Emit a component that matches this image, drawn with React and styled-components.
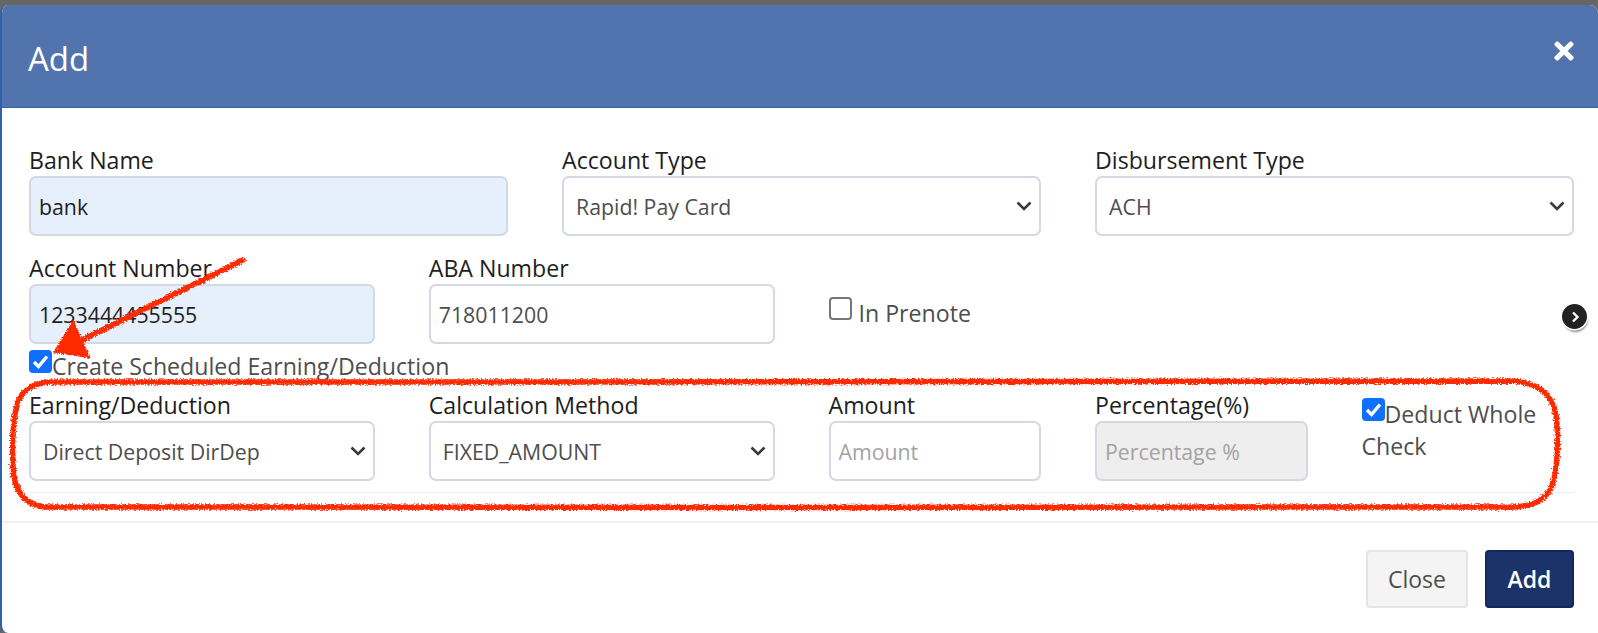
import React from "react";
import styled, { createGlobalStyle } from "styled-components";
import { FaTimes } from "react-icons/fa";

const GlobalStyle = createGlobalStyle`
  html, body {
    margin: 0;
    padding: 0;
    height: 633px;
    overflow: hidden;
    background: #666664;
  }
  * {
    box-sizing: border-box;
  }
`;

const Page = styled.div`
  position: relative;
  width: 1598px;
  height: 633px;
  padding-top: 5px;
  overflow: hidden;
  font-family: "Open Sans", "Liberation Sans", sans-serif;
`;

const Modal = styled.div`
  height: 628px;
  background: #fff;
  border-radius: 8px 8px 0 8px;
  border-left: 2px solid #2f62a8;
  overflow: hidden;
`;

const Header = styled.div`
  height: 103px;
  margin-left: -2px;
  padding: 0 20px 0 28px;
  display: flex;
  align-items: center;
  justify-content: space-between;
  background: #5174ae;
  border-bottom: 1px solid #3563a6;
  color: #fff;
`;

const Title = styled.div`
  font-size: 33px;
  line-height: 40px;
  margin-top: 5px;
`;

const CloseIcon = styled(FaTimes)`
  font-size: 28px;
  margin-bottom: 10px;
`;

const Body = styled.div`
  padding: 36px 24px 0 27px;
`;

const Row = styled.div`
  display: grid;
  grid-template-columns: repeat(12, 1fr);
  column-gap: 54px;
  margin-bottom: ${(p) => p.$gap || 0}px;
`;

const Field = styled.div`
  grid-column: span ${(p) => p.$span};
  display: flex;
  flex-direction: column;
`;

const Label = styled.label`
  height: 32px;
  font-size: 23.15px;
  line-height: 32px;
  color: #1e1e1e;
  white-space: nowrap;
`;

const Control = styled.input`
  width: 100%;
  height: 60px;
  padding: 0 8px;
  border: 2px solid #d3d8e4;
  border-radius: 7px;
  font-family: inherit;
  font-size: 21.3px;
  color: ${(p) => (p.$muted ? "#4e4e4e" : "#1e1e1e")};
  background: ${(p) => (p.$filled ? "#e6f0fd" : "#fff")};
  &::placeholder {
    color: #a3a3a3;
    opacity: 1;
  }
  &:disabled {
    background: #eeeeee;
  }
`;

const SelectBox = styled.div`
  width: 100%;
  height: 60px;
  padding: 0 6px 0 12px;
  display: flex;
  align-items: center;
  justify-content: space-between;
  border: 2px solid #d3d8e4;
  border-radius: 7px;
  font-size: 21.3px;
  color: #4e4e4e;
`;

const Chevron = styled.svg`
  width: 18px;
  height: 12px;
  flex: none;
`;

const Box = styled.span`
  display: inline-flex;
  align-items: center;
  justify-content: center;
  width: 23px;
  height: 23px;
  vertical-align: top;
  border-radius: 4px;
  background: ${(p) => (p.$checked ? "#0f6fff" : "#fff")};
  border: ${(p) => (p.$checked ? "none" : "2px solid #767676")};
`;

const CheckLine = styled.div`
  font-size: 23.15px;
  line-height: 32px;
  color: #4e4e4e;
`;

const PrenoteCell = styled.div`
  grid-column: span 4;
  padding-top: 45px;
  & > div > span {
    margin-right: 7px;
  }
`;

const DeductCell = styled.div`
  grid-column: span 2;
  padding-top: 9px;
`;

const ScheduledLine = styled(CheckLine)`
  height: 45px;
  padding-top: 6px;
`;

const Divider = styled.div`
  height: 1px;
  margin: 11px 0 0;
  background: #e9eef6;
`;

const Footer = styled.div`
  margin-top: 28px;
  border-top: 2px solid #f1f1f1;
  padding: 27px 24px 0 0;
  display: flex;
  justify-content: flex-end;
  gap: 17px;
`;

const Button = styled.button`
  height: 58px;
  padding: 0;
  width: ${(p) => (p.$primary ? "89px" : "102px")};
  border-radius: 4px;
  font-family: inherit;
  font-size: 23px;
  font-weight: ${(p) => (p.$primary ? 600 : 400)};
  color: ${(p) => (p.$primary ? "#fff" : "#4e4e4e")};
  background: ${(p) => (p.$primary ? "#1b3368" : "#f4f4f4")};
  border: 2px solid ${(p) => (p.$primary ? "#12275a" : "#e4e4e4")};
`;

const ScrollDot = styled.div`
  position: absolute;
  left: 1562px;
  top: 304px;
  width: 25px;
  height: 25px;
  display: flex;
  align-items: center;
  justify-content: center;
  border-radius: 50%;
  background: #222;
  box-shadow: 0 0 0 1.5px #fff, 1px 3px 2px #8a8a8a;
`;

const Annotation = styled.svg`
  position: absolute;
  left: 0;
  top: 0;
  pointer-events: none;
`;

const Tick = () => (
  <svg width="17" height="15" viewBox="0 0 17 15">
    <path d="M2 8l4.5 4.5L15 2.5" fill="none" stroke="#fff" strokeWidth="3.4" />
  </svg>
);

const Arrow = () => (
  <Chevron viewBox="0 0 18 12">
    <path d="M2.5 2.5L9 9l6.5-6.5" fill="none" stroke="#3a3a3a" strokeWidth="2.6" />
  </Chevron>
);

const App = () => {
  return (
    <Page>
      <GlobalStyle />
      <Modal>
        <Header>
          <Title>Add</Title>
          <CloseIcon />
        </Header>
        <Body>
          <Row $gap={16}>
            <Field $span={4}>
              <Label>Bank Name</Label>
              <Control $filled defaultValue="bank" />
            </Field>
            <Field $span={4}>
              <Label>Account Type</Label>
              <SelectBox>Rapid! Pay Card<Arrow /></SelectBox>
            </Field>
            <Field $span={4}>
              <Label>Disbursement Type</Label>
              <SelectBox>ACH<Arrow /></SelectBox>
            </Field>
          </Row>
          <Row>
            <Field $span={3}>
              <Label>Account Number</Label>
              <Control $filled defaultValue="1233444455555" />
            </Field>
            <Field $span={3}>
              <Label>ABA Number</Label>
              <Control $muted defaultValue="718011200" />
            </Field>
            <PrenoteCell>
              <CheckLine><Box />In Prenote</CheckLine>
            </PrenoteCell>
          </Row>
          <ScheduledLine><Box $checked><Tick /></Box>Create Scheduled Earning/Deduction</ScheduledLine>
          <Row>
            <Field $span={3}>
              <Label>Earning/Deduction</Label>
              <SelectBox>Direct Deposit DirDep<Arrow /></SelectBox>
            </Field>
            <Field $span={3}>
              <Label>Calculation Method</Label>
              <SelectBox>FIXED_AMOUNT<Arrow /></SelectBox>
            </Field>
            <Field $span={2}>
              <Label>Amount</Label>
              <Control placeholder="Amount" />
            </Field>
            <Field $span={2}>
              <Label>Percentage(%)</Label>
              <Control disabled placeholder="Percentage %" />
            </Field>
            <DeductCell>
              <CheckLine><Box $checked><Tick /></Box>Deduct Whole Check</CheckLine>
            </DeductCell>
          </Row>
          <Divider />
        </Body>
        <Footer>
          <Button>Close</Button>
          <Button $primary>Add</Button>
        </Footer>
      </Modal>
      <ScrollDot>
        <svg width="12" height="14" viewBox="0 0 12 14">
          <path d="M4 2.5L8.5 7 4 11.5" fill="none" stroke="#fff" strokeWidth="2.4" />
        </svg>
      </ScrollDot>
      <Annotation width="1598" height="633" viewBox="0 0 1598 633">
        <defs>
          <filter id="rough" x="-5%" y="-5%" width="110%" height="110%">
            <feTurbulence type="fractalNoise" baseFrequency="0.7" numOctaves="2" seed="3" />
            <feDisplacementMap in="SourceGraphic" scale="5" xChannelSelector="R" yChannelSelector="G" />
          </filter>
        </defs>
        <g filter="url(#rough)" fill="none" stroke="#ff2a00" strokeWidth="5.5" strokeLinecap="round">
          <path d="M243 260L72 345" />
          <path d="M73 322L55 352L89 357Z" fill="#ff2a00" strokeWidth="2" />
          <path d="M50 382C200 382 1300 382 1512 381C1545 383 1556 400 1557 425C1559 450 1556 480 1550 490C1540 505 1525 508 1500 507C1300 508 200 507 45 507C25 506 13 490 13 465C12 440 13 420 17 405C22 388 35 383 50 382Z" />
        </g>
      </Annotation>
    </Page>
  );
};

export default App;
